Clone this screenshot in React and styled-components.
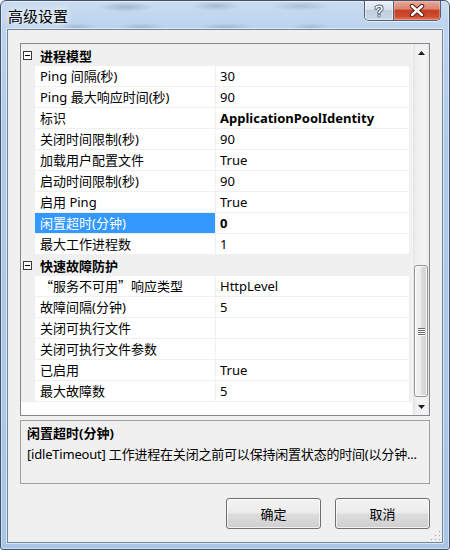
import React from 'react';
import styled, { createGlobalStyle } from 'styled-components';

const FONT = `"Noto Sans", "Noto Sans CJK SC", sans-serif`;

const GlobalStyle = createGlobalStyle`
  html, body { margin: 0; padding: 0; }
  body {
    width: 450px;
    height: 550px;
    overflow: hidden;
    background: #ffffff;
    font-family: ${FONT};
  }
  * { box-sizing: border-box; }
`;

const Window = styled.div`
  width: 450px;
  height: 550px;
  display: flex;
  flex-direction: column;
  border: 1px solid #42526a;
  border-radius: 6px 6px 3px 3px;
  background:
    radial-gradient(ellipse 28px 5px at 125px 6px, rgba(70, 85, 110, 0.28), transparent),
    radial-gradient(ellipse 24px 5px at 215px 5px, rgba(70, 85, 110, 0.25), transparent),
    radial-gradient(ellipse 30px 5px at 300px 5px, rgba(70, 85, 110, 0.22), transparent),
    radial-gradient(ellipse 22px 4px at 75px 26px, rgba(70, 85, 110, 0.2), transparent),
    radial-gradient(ellipse 24px 4px at 140px 26px, rgba(70, 85, 110, 0.22), transparent),
    radial-gradient(ellipse 28px 4px at 225px 26px, rgba(70, 85, 110, 0.22), transparent),
    radial-gradient(ellipse 20px 4px at 310px 26px, rgba(70, 85, 110, 0.2), transparent),
    linear-gradient(180deg, #c9dcf1 0px, #bcd3ed 28px, #b1cbe9 120px, #a9c5e6 100%);
  box-shadow: inset 0 0 0 1px rgba(255, 255, 255, 0.45);
  overflow: hidden;
`;

const TitleBar = styled.div`
  height: 28px;
  flex: none;
  display: flex;
  align-items: flex-start;
  justify-content: space-between;
  padding-left: 7px;
`;

const Title = styled.div`
  font-family: "Noto Sans CJK SC", sans-serif;
  font-size: 15px;
  line-height: 15px;
  margin-top: 7px;
  color: #000;
  text-shadow: 0 0 6px #fff, 0 0 10px rgba(255, 255, 255, 0.9);
`;

const CaptionButtons = styled.div`
  display: flex;
  margin-right: 8px;
  height: 20px;
  border: 1px solid #4f5f77;
  border-top: none;
  border-radius: 0 0 5px 5px;
  overflow: hidden;
  box-shadow: 0 1px 0 rgba(255, 255, 255, 0.6);
`;

const HelpButton = styled.div`
  width: 29px;
  height: 19px;
  display: flex;
  align-items: center;
  justify-content: center;
  border-right: 1px solid #4f5f77;
  background: linear-gradient(180deg, #eaf0f7 0%, #d7e1ec 45%, #bfcddd 50%, #cbd8e6 100%);
  box-shadow: inset 0 0 0 1px rgba(255, 255, 255, 0.45);
`;

const CloseButton = styled.div`
  width: 46px;
  height: 19px;
  display: flex;
  align-items: center;
  justify-content: center;
  background: linear-gradient(180deg, #e9a99b 0%, #d9836f 42%, #c53f25 50%, #cf4a2f 80%, #e07a5c 100%);
  box-shadow: inset 0 0 0 1px rgba(255, 220, 210, 0.35);
`;

const Client = styled.div`
  flex: 1;
  margin: 0 6px 6px 6px;
  border: 1px solid #72859c;
  background: #f0f0f0;
  display: flex;
  flex-direction: column;
  padding: 13px 12px 13px 12px;
  position: relative;
  box-shadow: 0 0 0 1px rgba(255, 255, 255, 0.55);
`;

const Grid = styled.div`
  height: 373px;
  flex: none;
  border: 1px solid #828790;
  display: flex;
  background: #ffffff;
`;

const Rows = styled.div`
  flex: 1;
  display: flex;
  flex-direction: column;
  background: #ffffff;
  border-top: 1px solid #f0f0f0;
`;

const CategoryRow = styled.div`
  height: 21px;
  flex: none;
  display: flex;
  align-items: center;
  background: #f0f0f0;
  font-family: ${FONT};
  font-size: 13px;
  font-weight: 700;
  color: #000;
`;

const Expander = styled.div`
  width: 9px;
  height: 9px;
  margin-left: 2px;
  margin-right: 8px;
  border: 1px solid #3a3a3a;
  background: #fff;
  display: flex;
  align-items: center;
  justify-content: center;
  &::after {
    content: '';
    width: 5px;
    height: 1px;
    background: #000;
  }
`;

const PropRow = styled.div`
  height: 21px;
  flex: none;
  display: flex;
  align-items: flex-start;
  background: #f0f0f0;
  padding-right: 3px;
  font-family: ${FONT};
  font-size: 13px;
  line-height: 20px;
  color: #000;
`;

const Gutter = styled.div`
  width: 14px;
  flex: none;
`;

const NameCell = styled.div`
  width: 180px;
  height: 20px;
  flex: none;
  margin-right: 1px;
  padding-left: 5px;
  white-space: nowrap;
  overflow: hidden;
  background: ${(p) => (p.$selected ? '#3399ff' : '#ffffff')};
  color: ${(p) => (p.$selected ? '#ffffff' : '#000000')};
`;

const ValueCell = styled.div`
  flex: 1;
  height: 20px;
  padding-left: 4px;
  white-space: nowrap;
  overflow: hidden;
  background: #ffffff;
  font-weight: ${(p) => (p.$bold ? 700 : 400)};
`;

const CjkQuote = styled.span`
  font-family: "Noto Sans CJK SC", sans-serif;
`;

const Scrollbar = styled.div`
  width: 17px;
  flex: none;
  display: flex;
  flex-direction: column;
  background: linear-gradient(90deg, #e2e2e2 0%, #f0f0f0 18%, #f3f3f3 80%, #e9e9e9 100%);
  border-left: 1px solid #f7f7f7;
`;

const ArrowButton = styled.div`
  height: 17px;
  flex: none;
  display: flex;
  align-items: center;
  justify-content: center;
`;

const Track = styled.div`
  flex: 1;
  display: flex;
  flex-direction: column;
  padding: 0 1px;
`;

const Thumb = styled.div`
  flex: none;
  border: 1px solid #979797;
  border-radius: 3px;
  background: linear-gradient(90deg, #f4f4f4 0%, #ececec 45%, #dcdcdc 55%, #d2d2d2 100%);
  box-shadow: inset 0 0 0 1px rgba(255, 255, 255, 0.75);
  display: flex;
  align-items: center;
  justify-content: center;
`;

const Grip = styled.div`
  width: 7px;
  display: flex;
  flex-direction: column;
  gap: 1px;
  & > span {
    display: block;
    height: 1px;
    background: #6b6b6b;
    box-shadow: 0 1px 0 #ffffff;
  }
`;

const Description = styled.div`
  height: 64px;
  flex: none;
  margin-top: 4px;
  border: 1px solid #a0a0a0;
  background: #f0f0f0;
  padding: 2px 6px 0 6px;
  font-family: ${FONT};
  font-size: 13px;
  line-height: 21px;
  color: #000;
`;

const DescTitle = styled.div`
  font-weight: 700;
  white-space: nowrap;
`;

const DescText = styled.div`
  white-space: nowrap;
  letter-spacing: -0.2px;
`;

const ButtonRow = styled.div`
  margin-top: auto;
  display: flex;
  justify-content: flex-end;
  gap: 14px;
`;

const DialogButton = styled.button`
  width: 95px;
  height: 31px;
  border: 1px solid #707070;
  border-radius: 3px;
  background: linear-gradient(180deg, #f3f3f3 0%, #ebebeb 48%, #dddddd 52%, #cfcfcf 100%);
  box-shadow: inset 0 0 0 1px rgba(255, 255, 255, 0.7);
  font-family: ${FONT};
  font-size: 13px;
  color: #000;
  padding: 0;
  cursor: default;
`;

const SizeGrip = styled.svg`
  position: absolute;
  right: 1px;
  bottom: 1px;
`;

const sections = [
  {
    title: '进程模型',
    items: [
      { name: 'Ping 间隔(秒)', value: '30' },
      { name: 'Ping 最大响应时间(秒)', value: '90' },
      { name: '标识', value: 'ApplicationPoolIdentity', bold: true },
      { name: '关闭时间限制(秒)', value: '90' },
      { name: '加载用户配置文件', value: 'True' },
      { name: '启动时间限制(秒)', value: '90' },
      { name: '启用 Ping', value: 'True' },
      { name: '闲置超时(分钟)', value: '0', bold: true, selected: true },
      { name: '最大工作进程数', value: '1' },
    ],
  },
  {
    title: '快速故障防护',
    items: [
      {
        name: (
          <>
            <CjkQuote>“</CjkQuote>服务不可用<CjkQuote>”</CjkQuote>响应类型
          </>
        ),
        value: 'HttpLevel',
      },
      { name: '故障间隔(分钟)', value: '5' },
      { name: '关闭可执行文件', value: '' },
      { name: '关闭可执行文件参数', value: '' },
      { name: '已启用', value: 'True' },
      { name: '最大故障数', value: '5' },
    ],
  },
];

function HelpGlyph() {
  return (
    <svg width="12" height="14" viewBox="0 0 12 14">
      <path
        d="M3 4.2 C3 1.6 9 1.6 9 4.4 C9 6.6 6 6.6 6 8.8"
        fill="none"
        stroke="#4d5d72"
        strokeWidth="3.4"
        strokeLinecap="round"
      />
      <path
        d="M3 4.2 C3 1.6 9 1.6 9 4.4 C9 6.6 6 6.6 6 8.8"
        fill="none"
        stroke="#ffffff"
        strokeWidth="1.6"
        strokeLinecap="round"
      />
      <circle cx="6" cy="11.8" r="1.7" fill="#4d5d72" />
      <circle cx="6" cy="11.8" r="0.9" fill="#ffffff" />
    </svg>
  );
}

function CloseGlyph() {
  return (
    <svg width="16" height="13" viewBox="0 0 16 13">
      <path d="M3 2 L13 11 M13 2 L3 11" stroke="#5a1d12" strokeWidth="4.4" strokeLinecap="round" />
      <path d="M3 2 L13 11 M13 2 L3 11" stroke="#ffffff" strokeWidth="2.4" strokeLinecap="round" />
    </svg>
  );
}

function Arrow({ up }) {
  return (
    <svg width="7" height="4" viewBox="0 0 7 4">
      <path d={up ? 'M0 4 L3.5 0 L7 4 Z' : 'M0 0 L3.5 4 L7 0 Z'} fill="#1e1e1e" />
    </svg>
  );
}

export default function App() {
  const thumbOffset = 204;
  const thumbHeight = 132;
  return (
    <>
      <GlobalStyle />
      <Window>
        <TitleBar>
          <Title>高级设置</Title>
          <CaptionButtons>
            <HelpButton>
              <HelpGlyph />
            </HelpButton>
            <CloseButton>
              <CloseGlyph />
            </CloseButton>
          </CaptionButtons>
        </TitleBar>
        <Client>
          <Grid>
            <Rows>
              {sections.map((sec) => (
                <React.Fragment key={sec.title}>
                  <CategoryRow>
                    <Expander />
                    {sec.title}
                  </CategoryRow>
                  {sec.items.map((it, i) => (
                    <PropRow key={i}>
                      <Gutter />
                      <NameCell $selected={it.selected}>{it.name}</NameCell>
                      <ValueCell $bold={it.bold}>{it.value}</ValueCell>
                    </PropRow>
                  ))}
                </React.Fragment>
              ))}
            </Rows>
            <Scrollbar>
              <ArrowButton>
                <Arrow up />
              </ArrowButton>
              <Track>
                <div style={{ height: thumbOffset, flex: 'none' }} />
                <Thumb style={{ height: thumbHeight }}>
                  <Grip>
                    <span />
                    <span />
                    <span />
                    <span />
                  </Grip>
                </Thumb>
              </Track>
              <ArrowButton>
                <Arrow />
              </ArrowButton>
            </Scrollbar>
          </Grid>
          <Description>
            <DescTitle>闲置超时(分钟)</DescTitle>
            <DescText>[idleTimeout] 工作进程在关闭之前可以保持闲置状态的时间(以分钟...</DescText>
          </Description>
          <ButtonRow>
            <DialogButton>确定</DialogButton>
            <DialogButton>取消</DialogButton>
          </ButtonRow>
          <SizeGrip width="11" height="11" viewBox="0 0 11 11">
            {[
              [9, 1], [9, 5], [5, 5], [9, 9], [5, 9], [1, 9],
            ].map(([x, y], i) => (
              <g key={i}>
                <rect x={x + 0.6} y={y + 0.6} width="1.2" height="1.2" fill="#ffffff" />
                <rect x={x} y={y} width="1.2" height="1.2" fill="#a0a8b4" />
              </g>
            ))}
          </SizeGrip>
        </Client>
      </Window>
    </>
  );
}
